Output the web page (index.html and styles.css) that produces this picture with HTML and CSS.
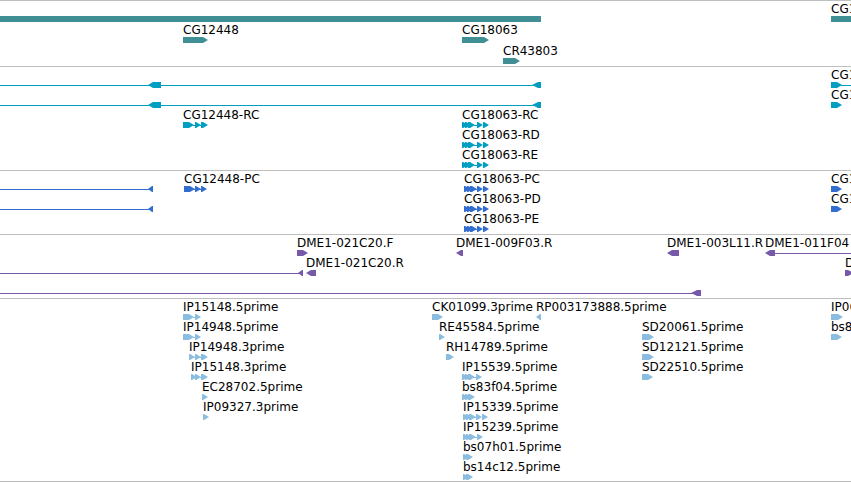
FILE: index.html
```html
<!DOCTYPE html>
<html lang="en">
<head>
<meta charset="utf-8">
<title>Genome tracks</title>
<link rel="stylesheet" href="styles.css">
</head>
<body>
<svg class="defs" aria-hidden="true">
  <defs>
    <path id="tip" d="M0 0H1L6 3L1 6H0z"/>
    <path id="tip-back" d="M5 0H4L0 3L4 6H5z"/>
    <path id="block" d="M0 0H6L11 3L6 6H0z"/>
    <path id="block-back" d="M13 0H5L0 3L5 6H13z"/>
    <path id="long" d="M0 0H20L25 3L20 6H0z"/>
    <path id="group" d="M0 0H1L3 1V0H4L6 1V0H8L13 3L8 6H6V5L4 6H3V5L1 6H0z"/>
    <g id="group-two"><use href="#group"/><path d="M12 3h4v1h-4z"/><use href="#tip" x="15"/><use href="#tip" x="21"/></g>
    <g id="group-two-short"><use href="#group"/><path d="M11 3h3v1h-3z"/><use href="#tip" x="13"/><use href="#tip" x="19"/></g>
    <g id="group-one"><use href="#group"/><path d="M11 3h4v1h-4z"/><use href="#tip" x="14"/></g>
    <g id="block-two"><use href="#block"/><path d="M10 3h9v1h-9z"/><use href="#tip" x="12"/><path d="M18 0H20L25 3L20 6H18z"/></g>
    <g id="block-one"><use href="#block"/><path d="M10 3h3v1h-3z"/><use href="#tip" x="12"/></g>
    <g id="three"><use href="#tip"/><use href="#tip" x="6"/><path d="M12 0H14L19 3L14 6H12z"/><path d="M5 3h8v1H5z"/></g>
    <path id="pair" d="M0 0H1L3 1V0H5L10 3L5 6H3V5L1 6H0z"/>
  </defs>
</svg>
<main class="browser">
  <section class="track genes" aria-label="Genes">
    <div class="lane">
      <div class="feature" style="--x:0px"><svg class="glyph"><path d="M0 0H541V6H0z"/></svg></div>
      <div class="feature" style="--x:831px"><span class="label">CG1</span><svg class="glyph"><path d="M0 0H400V6H0z"/></svg></div>
    </div>
    <div class="lane">
      <div class="feature" style="--x:183px"><span class="label">CG12448</span><svg class="glyph"><use href="#long"/></svg></div>
      <div class="feature" style="--x:462px"><span class="label">CG18063</span><svg class="glyph"><path d="M0 0H22L27 3L22 6H0z"/></svg></div>
    </div>
    <div class="lane">
      <div class="feature" style="--x:503px"><span class="label">CR43803</span><svg class="glyph"><path d="M0 0H12L17 3L12 6H0z"/></svg></div>
    </div>
  </section>

  <section class="track transcripts" aria-label="Transcripts">
    <div class="lane">
      <div class="feature" style="--x:0px"><svg class="glyph"><path d="M0 3H541V4H0z"/><use href="#block-back" x="148"/><path d="M541 0H538L532 3L538 6H541z"/></svg></div>
      <div class="feature" style="--x:831px"><span class="label">CG1</span><svg class="glyph"><use href="#block"/><path d="M10 3H400V4H10z"/></svg></div>
    </div>
    <div class="lane">
      <div class="feature" style="--x:0px"><svg class="glyph"><path d="M0 3H541V4H0z"/><use href="#block-back" x="148"/><path d="M541 0H538L532 3L538 6H541z"/></svg></div>
      <div class="feature" style="--x:831px"><span class="label">CG1</span><svg class="glyph"><use href="#block"/></svg></div>
    </div>
    <div class="lane">
      <div class="feature" style="--x:183px"><span class="label">CG12448-RC</span><svg class="glyph"><use href="#block-two"/></svg></div>
      <div class="feature" style="--x:462px"><span class="label">CG18063-RC</span><svg class="glyph"><use href="#group-two"/></svg></div>
    </div>
    <div class="lane">
      <div class="feature" style="--x:462px"><span class="label">CG18063-RD</span><svg class="glyph"><use href="#group-two"/></svg></div>
    </div>
    <div class="lane">
      <div class="feature" style="--x:462px"><span class="label">CG18063-RE</span><svg class="glyph"><use href="#group-two"/></svg></div>
    </div>
  </section>

  <section class="track proteins" aria-label="Proteins">
    <div class="lane">
      <div class="feature" style="--x:0px"><svg class="glyph"><path d="M0 3H150V4H0z"/><use href="#tip-back" x="148"/></svg></div>
      <div class="feature" style="--x:184px"><span class="label">CG12448-PC</span><svg class="glyph"><use href="#block"/><path d="M9 3h9v1h-9z"/><use href="#tip" x="11"/><use href="#tip" x="17"/></svg></div>
      <div class="feature" style="--x:464px"><span class="label">CG18063-PC</span><svg class="glyph"><use href="#group-two-short"/></svg></div>
      <div class="feature" style="--x:831px"><span class="label">CG1</span><svg class="glyph"><use href="#block"/></svg></div>
    </div>
    <div class="lane">
      <div class="feature" style="--x:0px"><svg class="glyph"><path d="M0 3H150V4H0z"/><use href="#tip-back" x="148"/></svg></div>
      <div class="feature" style="--x:464px"><span class="label">CG18063-PD</span><svg class="glyph"><use href="#group-two-short"/></svg></div>
      <div class="feature" style="--x:831px"><span class="label">CG1</span><svg class="glyph"><use href="#block"/></svg></div>
    </div>
    <div class="lane">
      <div class="feature" style="--x:464px"><span class="label">CG18063-PE</span><svg class="glyph"><use href="#group-two-short"/></svg></div>
    </div>
  </section>

  <section class="track ends" aria-label="Clone ends">
    <div class="lane">
      <div class="feature" style="--x:297px"><span class="label">DME1-021C20.F</span><svg class="glyph"><use href="#block"/></svg></div>
      <div class="feature" style="--x:456px"><span class="label">DME1-009F03.R</span><svg class="glyph"><path d="M7 0H5L0 3L5 6H7z"/></svg></div>
      <div class="feature" style="--x:667px"><span class="label">DME1-003L11.R</span><svg class="glyph"><path d="M12 0H5L0 3L5 6H12z"/></svg></div>
      <div class="feature" style="--x:765px"><span class="label">DME1-011F04</span><svg class="glyph"><path d="M10 0H5L0 3L5 6H10zM10 3H400V4H10z"/></svg></div>
    </div>
    <div class="lane">
      <div class="feature" style="--x:0px"><svg class="glyph"><path d="M0 3H300V4H0z"/><use href="#tip-back" x="298"/></svg></div>
      <div class="feature" style="--x:306px"><span class="label">DME1-021C20.R</span><svg class="glyph"><path d="M10 0H5L0 3L5 6H10z"/></svg></div>
      <div class="feature" style="--x:845px"><span class="label">D</span><svg class="glyph"><path d="M0 0H3L9 3L3 6H0z"/></svg></div>
    </div>
    <div class="lane">
      <div class="feature" style="--x:0px"><svg class="glyph"><path d="M0 3H694V4H0z"/><path d="M701 0H697L691 3L697 6H701z"/></svg></div>
    </div>
  </section>

  <section class="track ests" aria-label="ESTs">
    <div class="lane">
      <div class="feature" style="--x:183px"><span class="label">IP15148.5prime</span><svg class="glyph"><use href="#block-one"/></svg></div>
      <div class="feature" style="--x:432px"><span class="label">CK01099.3prime</span><svg class="glyph"><use href="#block"/></svg></div>
      <div class="feature" style="--x:536px"><span class="label">RP003173888.5prime</span><svg class="glyph"><use href="#tip-back"/></svg></div>
      <div class="feature" style="--x:831px"><span class="label">IP06</span><svg class="glyph"><path d="M0 0H7L12 3L7 6H0z"/></svg></div>
    </div>
    <div class="lane">
      <div class="feature" style="--x:183px"><span class="label">IP14948.5prime</span><svg class="glyph"><use href="#block-one"/></svg></div>
      <div class="feature" style="--x:439px"><span class="label">RE45584.5prime</span><svg class="glyph"><use href="#tip"/></svg></div>
      <div class="feature" style="--x:642px"><span class="label">SD20061.5prime</span><svg class="glyph"><path d="M0 0H7L12 3L7 6H0z"/></svg></div>
      <div class="feature" style="--x:831px"><span class="label">bs8</span><svg class="glyph"><use href="#block"/></svg></div>
    </div>
    <div class="lane">
      <div class="feature" style="--x:189px"><span class="label">IP14948.3prime</span><svg class="glyph"><use href="#three"/></svg></div>
      <div class="feature" style="--x:446px"><span class="label">RH14789.5prime</span><svg class="glyph"><path d="M0 0H3L8 3L3 6H0z"/></svg></div>
      <div class="feature" style="--x:642px"><span class="label">SD12121.5prime</span><svg class="glyph"><path d="M0 0H7L12 3L7 6H0z"/></svg></div>
    </div>
    <div class="lane">
      <div class="feature" style="--x:191px"><span class="label">IP15148.3prime</span><svg class="glyph"><use href="#tip"/><use href="#tip" x="4"/><path d="M9 3h2v1h-2z"/><path d="M10 0H12L17 3L12 6H10z"/></svg></div>
      <div class="feature" style="--x:462px"><span class="label">IP15539.5prime</span><svg class="glyph"><use href="#group-one"/></svg></div>
      <div class="feature" style="--x:642px"><span class="label">SD22510.5prime</span><svg class="glyph"><use href="#block"/></svg></div>
    </div>
    <div class="lane">
      <div class="feature" style="--x:202px"><span class="label">EC28702.5prime</span><svg class="glyph"><use href="#tip"/></svg></div>
      <div class="feature" style="--x:462px"><span class="label">bs83f04.5prime</span><svg class="glyph"><use href="#group"/></svg></div>
    </div>
    <div class="lane">
      <div class="feature" style="--x:203px"><span class="label">IP09327.3prime</span><svg class="glyph"><use href="#tip"/></svg></div>
      <div class="feature" style="--x:463px"><span class="label">IP15339.5prime</span><svg class="glyph"><use href="#group-two-short"/></svg></div>
    </div>
    <div class="lane">
      <div class="feature" style="--x:463px"><span class="label">IP15239.5prime</span><svg class="glyph"><use href="#group-one"/></svg></div>
    </div>
    <div class="lane">
      <div class="feature" style="--x:463px"><span class="label">bs07h01.5prime</span><svg class="glyph"><use href="#pair"/></svg></div>
    </div>
    <div class="lane">
      <div class="feature" style="--x:463px"><span class="label">bs14c12.5prime</span><svg class="glyph"><use href="#pair"/></svg></div>
    </div>
  </section>
</main>
</body>
</html>
```

FILE: styles.css
```css
body {
  margin: 0;
  background: #fff;
  color: #000;
  font: 12px/14px "DejaVu Sans", sans-serif;
}

.defs {
  position: absolute;
  width: 0;
  height: 0;
}

.browser {
  overflow: hidden;
  border-bottom: 1px solid #bebebe;
}

.track {
  border-top: 1px solid #bebebe;
  padding: 1px 0 2px;
}

.track.genes {
  padding-top: 0;
}

.track.ests {
  padding-bottom: 1px;
}

.lane {
  position: relative;
  height: 20px;
}

.genes .lane {
  height: 21px;
}

/* Features sit at their coordinate on the sequence axis. */
.feature {
  position: absolute;
  left: var(--x);
  bottom: 0;
  white-space: nowrap;
}

.label {
  display: block;
}

.glyph {
  display: block;
  width: 1px;
  height: 6px;
  overflow: visible;
  fill: currentColor;
}

.genes .glyph { color: #3f8f95; }
.transcripts .glyph { color: #009fc1; }
.proteins .glyph { color: #326dcf; }
.ends .glyph { color: #7759a9; }
.ests .glyph { color: #8abddf; }
```
